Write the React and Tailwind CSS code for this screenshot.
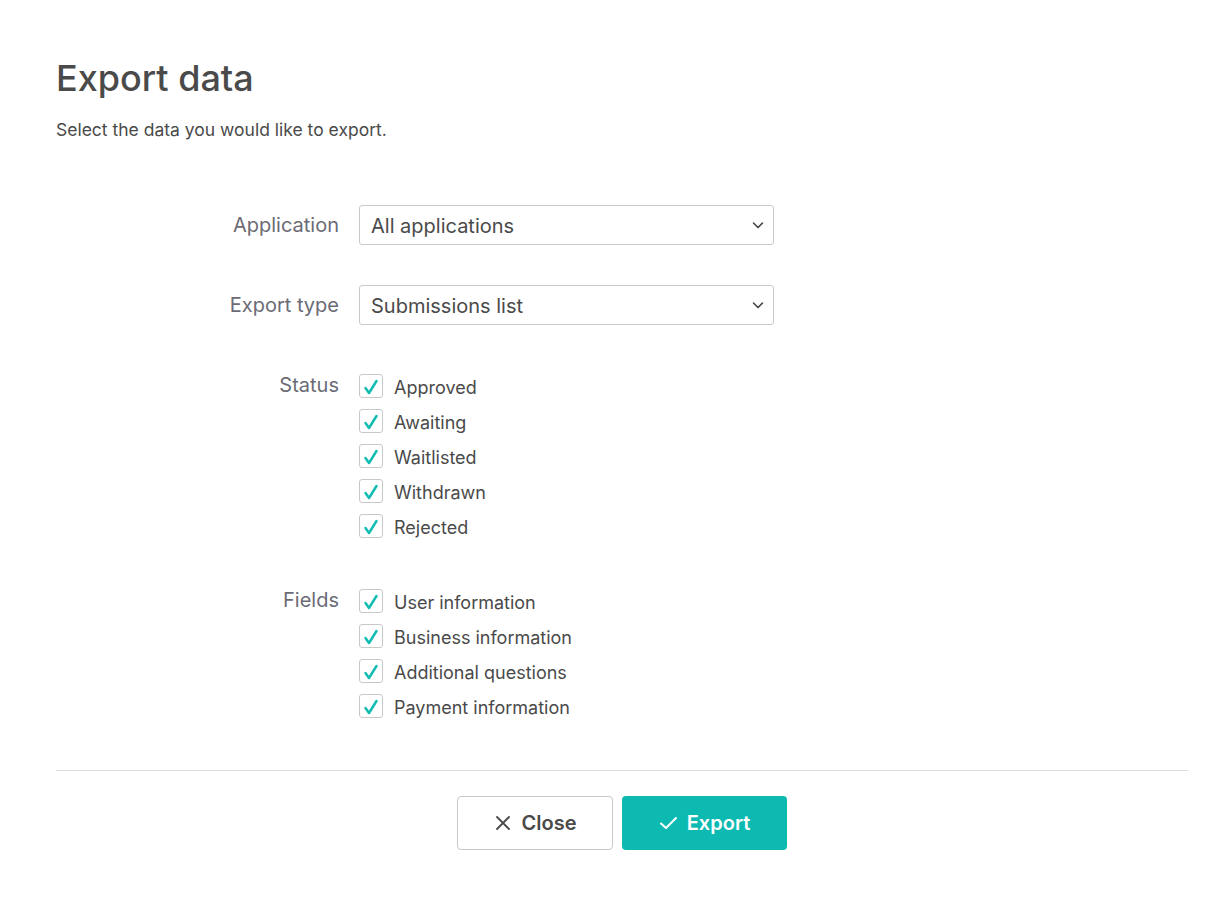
import React from "react";

const font = { fontFamily: "Inter, 'Noto Sans', sans-serif" };

function Check() {
  return (
    <span className="flex h-[24px] w-[24px] shrink-0 items-center justify-center rounded-[3px] border border-[#c8c8c8] bg-white">
      <svg width="18" height="18" viewBox="0 0 18 18" fill="none" className="translate-y-[1px]">
        <path d="M3.5 10 L7 15 L14.5 3" stroke="#12bcb3" strokeWidth="2.5" strokeLinecap="round" strokeLinejoin="round" />
      </svg>
    </span>
  );
}

function Select({ value }) {
  return (
    <div className="flex h-[40px] w-[415px] items-center justify-between rounded-[3px] border border-[#c9c9c9] bg-white pl-[11px] pr-[8px]">
      <span className="translate-y-[1px] text-[20px] text-[#4a4a4a]">{value}</span>
      <svg width="14" height="14" viewBox="0 0 14 14" fill="none">
        <path d="M2.5 5 L7 9.5 L11.5 5" stroke="#444" strokeWidth="1.6" strokeLinecap="round" strokeLinejoin="round" />
      </svg>
    </div>
  );
}

function CheckList({ items }) {
  return (
    <div className="flex flex-col gap-[11px]">
      {items.map((t) => (
        <div key={t} className="flex h-[24px] items-center gap-[11px]">
          <Check />
          <span className="translate-y-[1px] text-[18px] text-[#4a4a4a]">{t}</span>
        </div>
      ))}
    </div>
  );
}

export default function App() {
  return (
    <div className="min-h-[907px] bg-white pl-[56px] pr-[42px] pt-[56px]" style={font}>
      <h1 className="text-[36px] leading-[44px] font-medium text-[#4a4a4a]">Export data</h1>
      <p className="mt-[20px] text-[17.5px] leading-[20px] text-[#4a4a4a]">Select the data you would like to export.</p>

      <div className="mt-[65px] flex flex-col">
        <div className="flex items-center gap-[20px]">
          <div className="w-[283px] text-right text-[20px] text-[#6b6b75]">Application</div>
          <Select value="All applications" />
        </div>
        <div className="mt-[40px] flex items-center gap-[20px]">
          <div className="w-[283px] text-right text-[20px] text-[#6b6b75]">Export type</div>
          <Select value="Submissions list" />
        </div>
        <div className="mt-[49px] flex items-start gap-[20px]">
          <div className="w-[283px] -translate-y-[1px] text-right text-[20px] leading-[24px] text-[#6b6b75]">Status</div>
          <CheckList items={["Approved", "Awaiting", "Waitlisted", "Withdrawn", "Rejected"]} />
        </div>
        <div className="mt-[51px] flex items-start gap-[20px]">
          <div className="w-[283px] -translate-y-[1px] text-right text-[20px] leading-[24px] text-[#6b6b75]">Fields</div>
          <CheckList items={["User information", "Business information", "Additional questions", "Payment information"]} />
        </div>
      </div>

      <div className="mt-[52px] h-px bg-[#dcdcdc]" />

      <div className="mt-[25px] flex justify-center gap-[9px]">
        <button className="flex h-[54px] w-[156px] items-center justify-center gap-[10px] rounded-[4px] border border-[#c8c8c8] bg-white text-[20px] font-semibold text-[#4a4a4a]">
          <svg width="18" height="18" viewBox="0 0 18 18" fill="none">
            <path d="M3 3 L15 15 M15 3 L3 15" stroke="#4a4a4a" strokeWidth="1.8" strokeLinecap="round" />
          </svg>
          Close
        </button>
        <button className="flex h-[54px] w-[165px] items-center justify-center gap-[8px] rounded-[4px] bg-[#0dbab1] text-[20px] font-semibold text-white">
          <svg width="20" height="18" viewBox="0 0 20 18" fill="none">
            <path d="M2 9.5 L7 14 L17 4" stroke="white" strokeWidth="2" strokeLinecap="round" strokeLinejoin="round" />
          </svg>
          Export
        </button>
      </div>
    </div>
  );
}
